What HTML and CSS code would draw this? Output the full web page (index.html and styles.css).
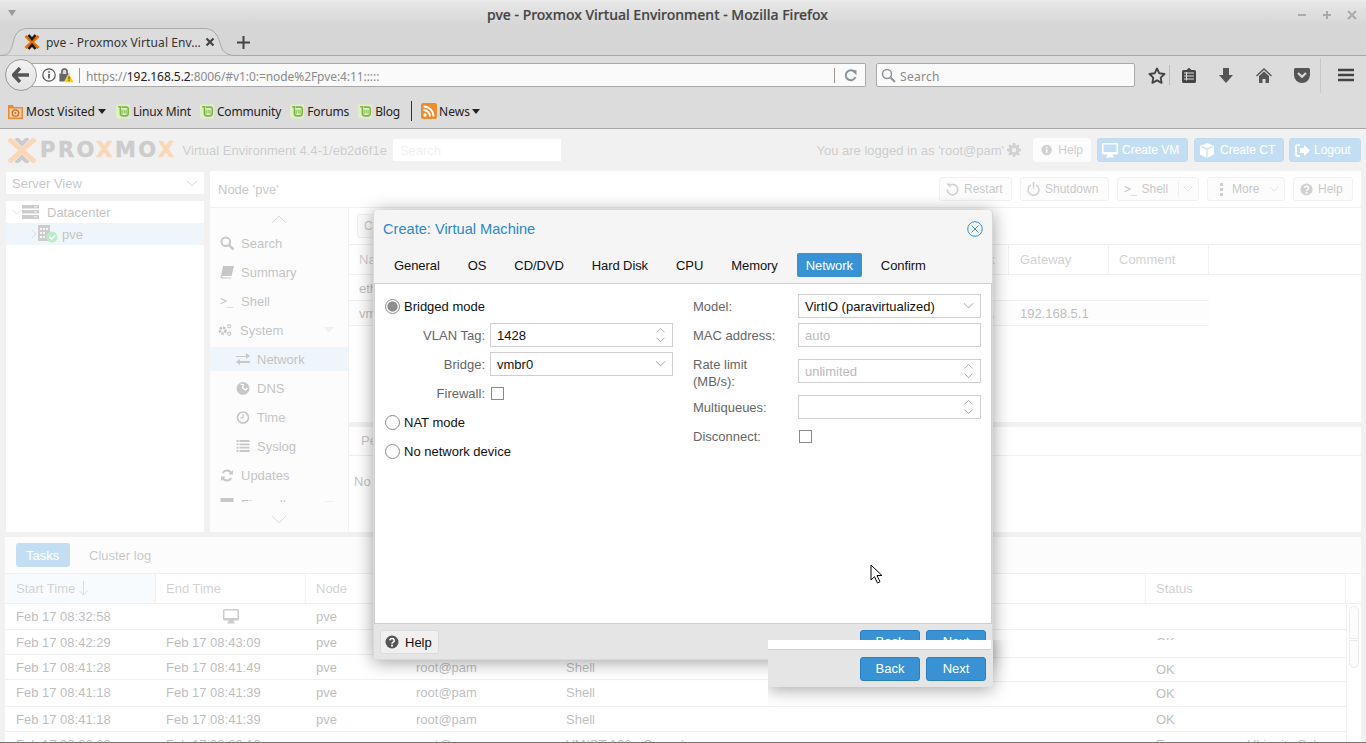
FILE: index.html
```html
<!DOCTYPE html>
<html lang="en">
<head>
<meta charset="utf-8">
<title>pve - Proxmox Virtual Environment</title>
<link rel="stylesheet" href="styles.css">
</head>
<body>
<svg class="defs" width="0" height="0">
  <symbol id="mint" viewBox="0 0 16 16"><rect width="16" height="16" fill="#dfeecb"/><path d="M2.500 2.500h2.500v7.500a3 3 0 0 0 3 3h3a3 3 0 0 0 3-3V5a2 2 0 0 0-2-2H6.500" fill="none" stroke="#7cb83e" stroke-width="1.800"/><path d="M7 11V6M9.300 10V6M11.500 11V6" stroke="#7cb83e" stroke-width="1.100"/></symbol>
  <symbol id="chev" viewBox="0 0 12 8"><path d="M1 1l5 5 5-5" fill="none" stroke="currentColor" stroke-width="1"/></symbol>
  <symbol id="spin" viewBox="0 0 12 18"><path d="M1.500 6l4.500-4.500 4.500 4.500M1.500 12l4.500 4.500 4.500-4.500" fill="none" stroke="currentColor" stroke-width="1"/></symbol>
  <symbol id="help" viewBox="0 0 14 14"><circle cx="7" cy="7" r="6.500" fill="currentColor"/><path d="M4.800 5.400a2.200 2 0 1 1 3.300 1.800c-.8.5-1.100.8-1.100 1.500" fill="none" stroke="#fff" stroke-width="1.500"/><rect x="6.100" y="9.700" width="1.800" height="1.800" fill="#fff"/></symbol>
  <symbol id="mon" viewBox="0 0 16 15"><path d="M1.500 0h13A1.500 1.500 0 0 1 16 1.500V10a1.500 1.500 0 0 1-1.500 1.500H10.500l.5 2h1v1H4v-1h1l.5-2h-4A1.500 1.500 0 0 1 0 10V1.500A1.500 1.500 0 0 1 1.500 0zM1.500 1.500V9h13V1.500z" fill="currentColor"/></symbol>
</svg>

<div class="screen">
  <header class="titlebar">
    <span class="wm-menu"></span>
    <span class="wm-title">pve - Proxmox Virtual Environment - Mozilla Firefox</span>
    <span class="wm-controls">
      <svg width="10" height="10" viewBox="0 0 10 10"><path d="M1 5h8" stroke="#aaa" stroke-width="2"/></svg>
      <svg width="10" height="10" viewBox="0 0 10 10"><path d="M1 5h8M5 1v8" stroke="#aaa" stroke-width="2"/></svg>
      <svg width="10" height="10" viewBox="0 0 10 10"><path d="M1 1l8 8M9 1l-8 8" stroke="#aaa" stroke-width="2"/></svg>
    </span>
  </header>

  <div class="tabstrip">
    <div class="tab">
      <svg class="tab-shape" width="236" height="28" viewBox="0 0 236 28"><path d="M0 27.500C9 27.500 11 23 13 15 15 5 19 .5 29 .5H203C213 .5 217 5 220 15 222 23 225 27.500 236 27.500V28H0z" fill="#dcdcdc" stroke="#a9a9a9"/></svg>
      <svg class="tab-icon" width="16" height="16" viewBox="0 0 16 16"><path d="M1.500 2L8 8l-6.500 6M14.500 2L8 8l6.500 6" fill="none" stroke="#e57000" stroke-width="3"/><path d="M4.500 1L8 5l3.500-4M4.500 15L8 11l3.500 4" fill="none" stroke="#1a1a1a" stroke-width="2.600"/></svg>
      <span class="tab-text">pve - Proxmox Virtual Env…</span>
      <svg class="tab-close" width="10" height="10" viewBox="0 0 10 10"><path d="M1.500 1.500l7 7M8.500 1.500l-7 7" stroke="#444" stroke-width="2.200"/></svg>
    </div>
    <svg class="tab-new" width="13" height="13" viewBox="0 0 13 13"><path d="M6.500 0v13M0 6.500h13" stroke="#444" stroke-width="2"/></svg>
  </div>

  <nav class="toolbar">
    <button class="back"><svg width="18" height="16" viewBox="0 0 18 16"><path d="M8 1L1.500 8 8 15M2 8h15" fill="none" stroke="#555" stroke-width="3.400"/></svg></button>
    <div class="urlbar">
      <svg class="url-info" width="14" height="14" viewBox="0 0 14 14"><circle cx="7" cy="7" r="6.200" fill="none" stroke="#555" stroke-width="1.200"/><path d="M7 6v4.500M7 3.200v1.500" stroke="#555" stroke-width="1.700"/></svg>
      <svg class="url-lock" width="15" height="16" viewBox="0 0 15 16"><path d="M1 7h9v7H1zM3 7V4.500a2.500 2.500 0 0 1 5 0V7" fill="#666" stroke="#666" stroke-width="1.200"/><path d="M3 7V4.500a2.500 2.500 0 0 1 5 0V7" fill="#dcdcdc" stroke="#666" stroke-width="1.500"/><path d="M10 6.500l5 9H5z" fill="#fc0" stroke="#fff" stroke-width=".5"/><path d="M10 9.500v3M10 13.200v1" stroke="#333"/></svg>
      <span class="url-text">https://<b>192.168.5.2</b>:8006/#v1:0:=node%2Fpve:4:11:::::</span>
      <span class="url-reload"><svg width="13" height="13" viewBox="0 0 13 13"><path d="M11 3.500A5 5 0 1 0 11.500 8" fill="none" stroke="#8a949c" stroke-width="2"/><path d="M7.500 0l5.500.5V5.500z" fill="#8a949c" transform="translate(-.5 .8)"/></svg></span>
    </div>
    <div class="searchbar">
      <svg width="15" height="15" viewBox="0 0 15 15"><circle cx="6" cy="6" r="4.500" fill="none" stroke="#8a949c" stroke-width="1.500"/><path d="M9.500 9.500l4.500 4.500" stroke="#8a949c" stroke-width="2"/></svg>
      <span class="search-t">Search</span>
    </div>
    <span class="tb star"><svg width="18" height="17" viewBox="0 0 18 17"><path d="M9 1.500l2.300 4.800 5.200.7-3.800 3.600.9 5.200L9 13.300l-4.600 2.500.9-5.200L1.500 7l5.200-.7z" fill="none" stroke="#444" stroke-width="1.900" stroke-linejoin="round"/></svg></span>
    <span class="tb list"><svg width="14" height="16" viewBox="0 0 14 16"><path d="M1.500 3h3L7 .8 9.500 3h3A1.500 1.500 0 0 1 14 4.500v10a1.500 1.500 0 0 1-1.500 1.500h-11A1.500 1.500 0 0 1 0 14.500v-10A1.500 1.500 0 0 1 1.500 3z" fill="#444"/><path d="M2 6h10M2 9h10M2 12h10M4.500 5v8.500" stroke="#dcdcdc" stroke-width="1.100"/></svg></span>
    <span class="tb"><svg width="14" height="15" viewBox="0 0 14 15"><path d="M4 0h6v7h4l-7 8-7-8h4z" fill="#555"/></svg></span>
    <span class="tb"><svg width="16" height="15" viewBox="0 0 16 15"><path d="M8 0L0 7.500l1 1L8 2l7 6.500 1-1zM8 3.500L3 8v7h3.500v-4h3v4H13V8z" fill="#555"/></svg></span>
    <span class="tb"><svg width="16" height="15" viewBox="0 0 16 15"><path d="M1.500 0h13A1.500 1.500 0 0 1 16 1.500V7A8 8 0 0 1 0 7V1.500A1.500 1.500 0 0 1 1.500 0z" fill="#555"/><path d="M4 5l4 3.800L12 5" fill="none" stroke="#dcdcdc" stroke-width="2.200"/></svg></span>
    <span class="tb menu"><svg width="16" height="14" viewBox="0 0 16 14"><path d="M0 2h16M0 7h16M0 12h16" stroke="#444" stroke-width="2.400"/></svg></span>
  </nav>

  <div class="bookmarks">
    <span class="bm bm-first"><svg width="15" height="15" viewBox="0 0 15 15"><path d="M0 1h5l1 2h9v12H0z" fill="#e98a3a"/><rect x="1.500" y="4.500" width="12" height="9" fill="#f6d3ae"/><circle cx="7.500" cy="9" r="3.200" fill="none" stroke="#d2691e" stroke-width="1.300"/><circle cx="7.500" cy="9" r="1" fill="#d2691e"/></svg><span class="bm-t">Most Visited</span><i class="caret"></i></span>
    <span class="bm bm-mint"><svg width="14" height="15"><use href="#mint"/></svg><span class="bm-t">Linux Mint</span></span>
    <span class="bm bm-mint"><svg width="14" height="15"><use href="#mint"/></svg><span class="bm-t">Community</span></span>
    <span class="bm bm-mint"><svg width="14" height="15"><use href="#mint"/></svg><span class="bm-t">Forums</span></span>
    <span class="bm bm-mint"><svg width="14" height="15"><use href="#mint"/></svg><span class="bm-t">Blog</span></span>
    <span class="bm-sep"></span>
    <span class="bm bm-news"><svg width="16" height="16" viewBox="0 0 16 16"><rect width="16" height="16" rx="2" fill="#ee8b2d"/><circle cx="4" cy="12" r="1.700" fill="#fff"/><path d="M2.500 7a6.500 6.500 0 0 1 6.500 6.500M2.500 3.500a10 10 0 0 1 10 10" fill="none" stroke="#fff" stroke-width="1.900"/></svg><span class="bm-t">News</span><i class="caret"></i></span>
  </div>

  <div class="pve">
    <div class="pve-head">
      <svg class="logo-x" width="30" height="25" viewBox="0 0 30 25"><path d="M2 1l13 11.500L2 24M28 1L15 12.500 28 24" fill="none" stroke="#e97a10" stroke-width="5"/><path d="M9 0l6 6 6-6M9 25l6-6 6 6" fill="none" stroke="#555" stroke-width="4"/></svg>
      <span class="logo-text">PRO<em>X</em>MO<em>X</em></span>
      <span class="version">Virtual Environment 4.4-1/eb2d6f1e</span>
      <span class="head-search">Search</span>
      <span class="logged">You are logged in as 'root@pam'</span>
      <svg class="gear" width="14" height="14" viewBox="0 0 14 14"><path d="M5.800 0h2.400l.3 1.900 1.200.5L11.300 1.300 12.700 2.700 11.600 4.300l.5 1.200 1.900.3v2.400l-1.900.3-.5 1.200 1.100 1.600-1.400 1.400-1.600-1.100-1.200.5L8.200 14H5.800l-.3-1.900-1.200-.5-1.600 1.100L1.300 11.300 2.400 9.700 1.900 8.500 0 8.200V5.800l1.900-.3.500-1.200L1.300 2.700 2.700 1.300l1.600 1.100 1.200-.5z" fill="#666"/><circle cx="7" cy="7" r="2.200" fill="#d0d0d0"/></svg>
      <button class="btn btn-plain head-help"><svg width="14" height="14" viewBox="0 0 14 14"><circle cx="7" cy="7" r="6.500" fill="#666"/><path d="M7 6v4.500M7 3v1.700" stroke="#fff" stroke-width="2"/></svg>Help</button>
      <button class="btn btn-blue head-vm"><svg width="16" height="15" class="ic-white"><use href="#mon"/></svg>Create VM</button>
      <button class="btn btn-blue head-ct"><svg width="14" height="15" viewBox="0 0 14 15"><path d="M7 0l7 3v8.500L7 15l-7-3.500V3z" fill="#fff"/><path d="M1 3.500L7 6l6-2.500M7 6v8.500" fill="none" stroke="#3892d4" stroke-width="1.200"/></svg>Create CT</button>
      <button class="btn btn-blue head-out"><svg width="15" height="13" viewBox="0 0 15 13"><path d="M5 1H2.500A1.500 1.500 0 0 0 1 2.500v8A1.500 1.500 0 0 0 2.500 12H5" fill="none" stroke="#fff" stroke-width="1.800"/><path d="M5 4h4V1l6 5.500L9 12V9H5z" fill="#fff"/></svg>Logout</button>
    </div>

    <div class="pve-main">
      <aside class="left">
        <div class="view-select">Server View<svg class="sel-chev" width="12" height="8"><use href="#chev"/></svg></div>
        <div class="tree">
          <div class="tree-row">
            <svg class="tw" width="10" height="7"><use href="#chev"/></svg>
            <svg width="17" height="14" viewBox="0 0 17 14"><path d="M0 0h17v3.500H0zM0 5h17v3.500H0zM0 10h17v4H0z" fill="#555"/><path d="M12 1.800h3M12 6.800h3M12 12h3" stroke="#ddd"/></svg>
            <span class="tree-dc">Datacenter</span>
          </div>
          <div class="tree-row tree-sel">
            <svg class="tw tw-r" width="7" height="10" viewBox="0 0 7 10"><path d="M1 1l4 4-4 4" fill="none" stroke="currentColor"/></svg>
            <span class="node-ic"><svg width="20" height="18" viewBox="0 0 20 18"><path d="M0 0h12v16H0z" fill="#555"/><path d="M2 3h2v2H2zM5 3h2v2H5zM8 3h2v2H8zM2 7h2v2H2zM5 7h2v2H5zM2 11h2v2H2zM5 11h2v2H5z" fill="#ddd"/><circle cx="14" cy="12" r="5.500" fill="#21bf4b"/><path d="M11.500 12l2 2 3.500-3.500" fill="none" stroke="#fff" stroke-width="1.500"/></svg></span>
            <span class="tree-pve">pve</span>
          </div>
        </div>
      </aside>

      <section class="node">
        <div class="node-head">
          <span class="node-title">Node 'pve'</span>
          <button class="btn btn-light b-restart"><svg width="13" height="13" viewBox="0 0 13 13"><path d="M3 2.800A5.200 5.200 0 1 1 1.300 6.500" fill="none" stroke="#666" stroke-width="1.600"/><path d="M0 .5h4.500V5z" fill="#666"/></svg>Restart</button>
          <button class="btn btn-light b-shut"><svg width="13" height="14" viewBox="0 0 13 14"><path d="M3.800 3a5.500 5.500 0 1 0 5.400 0" fill="none" stroke="#666" stroke-width="1.500"/><path d="M6.500 0v6.500" stroke="#666" stroke-width="1.600"/></svg>Shutdown</button>
          <button class="btn btn-light b-shell"><span class="prompt">&gt;_</span>Shell<span class="split"><svg width="10" height="7"><use href="#chev"/></svg></span></button>
          <button class="btn btn-light b-more"><svg width="3" height="13" viewBox="0 0 3 13"><path d="M0 0h3v3H0zM0 5h3v3H0zM0 10h3v3H0z" fill="#666"/></svg>More<svg class="more-chev" width="10" height="7"><use href="#chev"/></svg></button>
          <button class="btn btn-light b-help"><svg width="13" height="13" class="ic-g"><use href="#help"/></svg>Help</button>
        </div>
        <div class="node-body">
          <div class="side">
            <div class="side-arrow"><svg width="16" height="9" viewBox="0 0 16 9"><path d="M1 8l7-7 7 7" fill="none" stroke="#888"/></svg></div>
            <ul class="side-list">
              <li><svg width="14" height="14" viewBox="0 0 14 14"><circle cx="5.800" cy="5.800" r="4.300" fill="none" stroke="#444" stroke-width="2"/><path d="M9 9l4.500 4.500" stroke="#444" stroke-width="2.400"/></svg>Search</li>
              <li><svg width="14" height="14" viewBox="0 0 14 14"><path d="M3 1h11l-2.500 10H1z" fill="#444"/><path d="M1 11c0 1.500 1 2 2 2h8" fill="none" stroke="#444" stroke-width="1.200"/></svg>Summary</li>
              <li><span class="prompt">&gt;_</span>Shell</li>
              <li><svg class="wide" width="15" height="14" viewBox="0 0 15 14"><circle cx="5" cy="7.500" r="3" fill="none" stroke="#444" stroke-width="3" stroke-dasharray="2.500 1"/><circle cx="12" cy="3" r="1.700" fill="none" stroke="#444" stroke-width="1.200"/><circle cx="12" cy="11" r="1.700" fill="none" stroke="#444" stroke-width="1.200"/></svg>System<svg class="expand" width="10" height="6" viewBox="0 0 10 6"><path d="M0 0h10L5 6z" fill="#ccc"/></svg></li>
              <li class="sub sel"><svg width="14" height="12" viewBox="0 0 14 12"><path d="M0 3h10V0l4 3-4 3V4H0zM14 8H4V6L0 9l4 3v-2h10z" fill="#444"/></svg>Network</li>
              <li class="sub"><svg width="13" height="13" viewBox="0 0 13 13"><circle cx="6.500" cy="6.500" r="6.500" fill="#444"/><path d="M4 2l3 1-1 3 3 2 2-2" fill="none" stroke="#fff" stroke-width="1.200"/></svg>DNS</li>
              <li class="sub"><svg width="13" height="13" viewBox="0 0 13 13"><circle cx="6.500" cy="6.500" r="5.500" fill="none" stroke="#444" stroke-width="1.700"/><path d="M6.500 3v3.800H4" fill="none" stroke="#444" stroke-width="1.200"/></svg>Time</li>
              <li class="sub"><svg width="13" height="12" viewBox="0 0 13 12"><path d="M0 1h2M3 1h10M0 4.300h2M3 4.300h10M0 7.600h2M3 7.600h10M0 11h2M3 11h10" stroke="#444" stroke-width="1.800"/></svg>Syslog</li>
              <li><svg width="13" height="13" viewBox="0 0 13 13"><path d="M11 4.500A5 5 0 0 0 2.200 4M2 8.500A5 5 0 0 0 10.800 9" fill="none" stroke="#444" stroke-width="2"/><path d="M12.500 1v4.500H8zM.5 12V7.500H5z" fill="#444"/></svg>Updates</li>
              <li><svg width="13" height="13" viewBox="0 0 13 13"><path d="M0 0h13v13H0z" fill="#444"/></svg>Firewall<svg class="expand" width="10" height="6" viewBox="0 0 10 6"><path d="M0 0h10L5 6z" fill="#ccc"/></svg></li>
            </ul>
            <div class="side-arrow side-arrow-b"><svg width="16" height="9" viewBox="0 0 16 9"><path d="M1 1l7 7 7-7" fill="none" stroke="#888"/></svg></div>
          </div>
          <div class="content">
            <div class="net">
              <div class="net-tools"><button class="btn btn-light">Create</button></div>
              <div class="net-row net-header"><span>Name</span><span></span><span></span><span></span><span></span><span></span><span>Subnet mask</span><span>Gateway</span><span>Comment</span></div>
              <div class="net-row"><span>eth0</span><span></span><span></span><span></span><span></span><span></span><span></span><span></span><span></span></div>
              <div class="net-row net-alt"><span>vmbr0</span><span></span><span></span><span></span><span></span><span></span><span class="net-mask">255.255.255.0</span><span>192.168.5.1</span><span></span></div>
            </div>
            <div class="pending">
              <div class="pending-title">Pending changes</div>
              <div class="pending-body">No changes</div>
            </div>
          </div>
        </div>
      </section>
    </div>

    <section class="tasks">
      <div class="tasks-tabs"><span class="ttab on">Tasks</span><span class="ttab">Cluster log</span></div>
      <div class="t-row t-head">
        <span class="sorted">Start Time<svg width="11" height="15" viewBox="0 0 11 15"><path d="M5.500 0v14M1 9.500L5.500 14 10 9.500" fill="none" stroke="#888"/></svg></span><span>End Time</span><span>Node</span><span></span><span></span><span>Status</span><span class="t-fill"></span>
      </div>
      <div class="t-wrap">
        <div class="t-rows">
          <div class="t-row t-first"><span>Feb 17 08:32:58</span><span class="t-center"><svg width="16" height="15" class="ic-d"><use href="#mon"/></svg></span><span>pve</span><span></span><span></span><span></span></div>
          <div class="t-row"><span>Feb 17 08:42:29</span><span>Feb 17 08:43:09</span><span>pve</span><span></span><span></span><span>OK</span></div>
          <div class="t-row"><span>Feb 17 08:41:28</span><span>Feb 17 08:41:49</span><span>pve</span><span>root@pam</span><span>Shell</span><span></span></div>
          <div class="t-row t-tall"><span>Feb 17 08:41:18</span><span>Feb 17 08:41:39</span><span>pve</span><span>root@pam</span><span>Shell</span><span></span></div>
          <div class="t-row"><span>Feb 17 08:41:18</span><span>Feb 17 08:41:39</span><span>pve</span><span>root@pam</span><span>Shell</span><span>OK</span></div>
          <div class="t-row"><span>Feb 17 08:30:09</span><span>Feb 17 08:30:12</span><span>pve</span><span>root@pam</span><span>VM/CT 100 - Console</span><span>Error<span class="err-more">Ubiquity Sol</span></span></div>
          <div class="t-shift">
            <div class="ts-a"></div>
            <div class="ts-b"><span>OK</span></div>
            <div class="ts-c"><span>OK</span></div>
          </div>
        </div>
        <div class="t-scroll"><i class="thumb th1"></i><i class="thumb th2"></i></div>
      </div>
    </section>

    <div class="mask"></div>
  </div>
  <div class="screen-end"></div>

  <div class="dialog">
    <div class="d-title"><span>Create: Virtual Machine</span><svg width="16" height="16" viewBox="0 0 16 16"><circle cx="8" cy="8" r="7.300" fill="none" stroke="#3892d4" stroke-width="1"/><path d="M4.500 4.500l7 7M11.500 4.500l-7 7" stroke="#3892d4"/></svg></div>
    <div class="d-tabs"><span>General</span><span>OS</span><span>CD/DVD</span><span>Hard Disk</span><span>CPU</span><span>Memory</span><span class="on">Network</span><span>Confirm</span></div>
    <div class="d-body">
      <div class="d-col">
        <div class="f-row"><i class="radio on"></i><span class="r-label">Bridged mode</span></div>
        <div class="f-row"><label class="f-lab f-right">VLAN Tag:</label><div class="field"><span>1428</span><svg width="11" height="16"><use href="#spin"/></svg></div></div>
        <div class="f-row"><label class="f-lab f-right">Bridge:</label><div class="field"><span>vmbr0</span><svg width="11" height="8"><use href="#chev"/></svg></div></div>
        <div class="f-row"><label class="f-lab f-right">Firewall:</label><i class="check"></i></div>
        <div class="f-row"><i class="radio"></i><span class="r-label">NAT mode</span></div>
        <div class="f-row"><i class="radio"></i><span class="r-label">No network device</span></div>
      </div>
      <div class="d-col">
        <div class="f-row"><label class="f-lab">Model:</label><div class="field"><span>VirtIO (paravirtualized)</span><svg width="11" height="8"><use href="#chev"/></svg></div></div>
        <div class="f-row"><label class="f-lab">MAC address:</label><div class="field ph"><span>auto</span></div></div>
        <div class="f-row f-two"><label class="f-lab f-lab2">Rate limit<br>(MB/s):</label><div class="field ph"><span>unlimited</span><svg width="11" height="16"><use href="#spin"/></svg></div></div>
        <div class="f-row"><label class="f-lab">Multiqueues:</label><div class="field"><span></span><svg width="11" height="16"><use href="#spin"/></svg></div></div>
        <div class="f-row"><label class="f-lab">Disconnect:</label><i class="check"></i></div>
      </div>
    </div>
    <div class="d-foot">
      <button class="d-help"><svg width="14" height="14" class="ic-h"><use href="#help"/></svg>Help</button>
      <span class="d-grow"></span>
      <button class="d-blue">Back</button>
      <button class="d-blue">Next</button>
    </div>
  </div>

  <div class="glitch">
    <div class="g-white"></div>
    <div class="g-foot">
      <button class="d-blue">Back</button>
      <button class="d-blue">Next</button>
    </div>
  </div>

  <svg class="cursor" width="13" height="20" viewBox="0 0 13 20"><path d="M1 1v15l3.500-3.300L7.500 19l2.500-1.200-3-6.300H12z" fill="#fff" stroke="#000" stroke-width="1"/></svg>
</div>
</body>
</html>
```
FILE: styles.css
```css
* { box-sizing: border-box; }
html, body { margin: 0; padding: 0; height: 743px; overflow: hidden; }
body { font-family: "Liberation Sans", Arial, sans-serif; font-size: 13px; color: #222; background: #d0d0d0; }
.defs { position: absolute; }
button { font: inherit; }
i, em { font-style: normal; }

.screen { position: relative; width: 1366px; height: 743px; display: flex; flex-direction: column; overflow: hidden; }

/* window title */
.titlebar { height: 28px; display: flex; align-items: center; background: linear-gradient(#ededed 0, #e6e6e6 3px, #d6d6d6 25px); font-family: "Noto Sans", sans-serif; }
.wm-menu { width: 0; height: 0; margin-left: 8px; margin-top: -3px; border: 4.500px solid transparent; border-top: 6px solid #999; border-bottom: 0; }
.wm-title { flex: 1; text-align: center; font-size: 14px; font-weight: 500; color: #444; padding-left: 2px; -webkit-text-stroke: .2px #444; }
.wm-controls { display: flex; gap: 15px; margin-right: 9px; margin-top: 1px; }

/* tabs */
.tabstrip { height: 28px; background: #d6d6d6; border-bottom: 1px solid #a9a9a9; display: flex; align-items: flex-start; font-family: "Noto Sans", sans-serif; }
.tab { position: relative; width: 236px; height: 28px; display: flex; align-items: center; }
.tab-shape { position: absolute; left: 0; top: 0; }
.tab-icon { position: relative; margin-left: 24px; }
.tab-text { position: relative; margin-left: 6px; width: 155px; white-space: nowrap; font-size: 12px; letter-spacing: .1px; color: #333; }
.tab-close { position: relative; margin-left: 4px; }
.tab-new { margin: 8px 0 0 0.500px; }

/* toolbar */
.toolbar { height: 38px; background: #dcdcdc; display: flex; align-items: center; padding-left: 5px; font-family: "Noto Sans", sans-serif; }
.back { position: relative; z-index: 1; width: 32px; height: 32px; padding: 0; border-radius: 50%; border: 1px solid #9a9a9a; background: linear-gradient(#f2f2f2, #e2e2e2); display: flex; align-items: center; justify-content: center; }
.urlbar { width: 836px; height: 24px; margin-left: -7px; background: #fafafa; border: 1px solid #a9a9a9; border-left: 0; border-radius: 0 2px 2px 0; display: flex; align-items: center; padding-left: 12px; }
.url-info { flex: none; }
.url-lock { flex: none; margin-left: 3px; }
.url-text { flex: 1; margin-left: 5px; padding-left: 6px; height: 15px; line-height: 17px; border-left: 1px solid #999; color: #8c8c8c; font-size: 12px; letter-spacing: -.07px; white-space: nowrap; }
.url-text b { font-weight: 400; color: #222; }
.url-reload { width: 31px; height: 15px; border-left: 1px solid #999; display: flex; align-items: center; justify-content: center; }
.searchbar { width: 259px; height: 24px; margin-left: 10px; background: #fafafa; border: 1px solid #a9a9a9; border-radius: 2px; display: flex; align-items: center; gap: 4px; padding-left: 4px; color: #8c8c8c; font-size: 12px; letter-spacing: .3px; }
.search-t { padding-top: 2px; }
.tb { width: 38px; height: 20px; display: flex; align-items: center; justify-content: center; }
.star { width: 25px; margin-left: 9px; }
.list { border-left: 1px solid #bbb; }
.menu { height: 35px; border-left: 1px solid #c8c8c8; margin-left: -1px; width: 46px; padding-left: 4px; }

/* bookmarks */
.bookmarks { height: 35px; background: #dcdcdc; border-bottom: 1px solid #a9a9a9; display: flex; align-items: center; padding-left: 8px; font-family: "Noto Sans", sans-serif; font-size: 12px; color: #222; }
.bm { display: flex; align-items: center; gap: 3px; white-space: nowrap; }
.bm-t { padding-top: 1px; }
.bm-first { margin-right: 10px; }
.bm-mint { margin-right: 9px; gap: 3px; letter-spacing: -.15px; }
.bm-sep { width: 1px; height: 20px; background: #333; margin: 0 9px 0 2px; }
.bm-news { gap: 2px; }
.caret { width: 0; height: 0; border: 4.500px solid transparent; border-top: 5px solid #222; border-bottom: 0; }

/* proxmox page */
.pve { position: relative; flex: 1; min-height: 0; background: #d0d0d0; display: flex; flex-direction: column; overflow: hidden; }
.mask { position: absolute; inset: 0; background: rgba(255, 255, 255, .7); }
.screen-end { height: 1px; background: #777; }

.pve-head { height: 42px; flex: none; display: flex; align-items: center; padding: 0 5px 0 7px; }
.logo-text { margin-left: 3px; font-family: "DejaVu Sans", sans-serif; font-weight: 700; font-size: 21px; letter-spacing: 2.500px; color: #555; line-height: 1; -webkit-text-stroke: .5px #555; }
.logo-text em { color: #e97a10; -webkit-text-stroke: .5px #e97a10; }
.version { margin-left: 6px; font-size: 13px; color: #555; white-space: nowrap; }
.head-search { width: 168px; height: 22px; margin-left: 6px; background: #fff; color: #ccc; padding: 4px 7px; font-size: 13px; }
.logged { margin-left: auto; color: #555; white-space: nowrap; }
.gear { margin-left: 3px; margin-right: 12px; }

.btn { height: 24px; border-radius: 3px; border: 1px solid #ccc; display: inline-flex; align-items: center; gap: 6px; padding: 0 7px; white-space: nowrap; font-size: 12px; color: #555; }
.btn-plain { background: #f5f5f5; border-color: #f5f5f5; width: 58px; margin-right: 6px; }
.btn-blue { background: #3892d4; border-color: #2f86c7; color: #fff; margin-right: 6px; }
.head-vm { width: 91px; padding: 0 4px; gap: 4px; }
.head-ct { width: 90px; padding: 0 4px 0 5px; margin-right: 5px; }
.head-out { width: 72px; margin-right: 0; padding: 0 4px 0 5px; gap: 4px; }
.ic-white { color: #fff; }

.pve-main { height: 361px; flex: none; display: flex; padding: 0 5px 0 6px; gap: 6px; }
.left { width: 198px; flex: none; display: flex; flex-direction: column; gap: 7px; padding-top: 1px; }
.view-select { height: 22px; flex: none; background: #fff; color: #444; padding: 1px 6px 0; font-size: 13px; display: flex; align-items: center; justify-content: space-between; }
.sel-chev { color: #888; }
.tree { flex: 1; background: #fff; }
.tree-row { height: 22px; display: flex; align-items: center; color: #333; }
.tw { color: #888; margin-left: 6px; flex: none; }
.tw-r { margin-left: 25px; }
.tree-dc { margin-left: 8px; }
.tree-sel { background: #c7dff3; }
.node-ic { display: flex; }
.tree-pve { margin-left: 4px; }

.node { flex: 1; display: flex; flex-direction: column; min-width: 0; background: #fff; }
.node-head { height: 37px; flex: none; display: flex; align-items: center; padding: 0 8px; border-bottom: 1px solid #ccc; gap: 8px; }
.node-title { margin-right: auto; color: #444; font-size: 13px; }
.btn-light { background: #f5f5f5; color: #444; height: 24px; font-size: 12px; padding: 0 5px 0 6px; }
.b-restart { width: 73px; gap: 5px; }
.b-shut { width: 89px; gap: 5px; }
.b-shell { width: 82px; gap: 5px; }
.b-more { width: 78px; gap: 9px; padding-left: 12px; }
.b-help { width: 60px; gap: 5px; }
.ic-g { color: #666; }
.prompt { font-family: "DejaVu Sans Mono", monospace; font-size: 12px; color: #444; letter-spacing: -1px; }
.split { border-left: 1px solid #ccc; height: 16px; margin-left: auto; padding-left: 4px; display: flex; align-items: center; color: #888; }
.more-chev { color: #888; margin-left: auto; }

.node-body { flex: 1; display: flex; min-height: 0; }
.side { width: 139px; flex: none; background: #f5f5f5; border-right: 1px solid #ccc; display: flex; flex-direction: column; }
.side-arrow { height: 23px; display: flex; align-items: center; justify-content: center; flex: none; }
.side-arrow-b { height: 30px; padding-top: 4px; }
.side-list { flex: 1; min-height: 0; overflow: hidden; list-style: none; margin: 0; padding: 0; display: flex; flex-direction: column; gap: 5px; }
.side-list li { height: 24px; flex: none; display: flex; align-items: center; padding-left: 10px; gap: 7px; color: #333; position: relative; }
.side-list li > svg:first-child, .side-list li > .prompt { width: 14px; flex: none; }
.side-list .sub { padding-left: 26px; gap: 7px; }
.side-list .sel { background: #c7dff3; }
.wide { margin-left: -2px; margin-right: 1px; }
.expand { position: absolute; right: 14px; top: 9px; }

.content { flex: 1; display: flex; flex-direction: column; min-width: 0; gap: 5px; background: #d0d0d0; }
.net { height: 214px; flex: none; background: #fff; }
.net-tools { height: 37px; border-bottom: 1px solid #ccc; display: flex; align-items: center; padding-left: 8px; }
.net-row { display: grid; grid-template-columns: 100px 80px 80px 80px 120px 100px 100px 100px 100px; width: 860px; height: 26px; align-items: center; border-bottom: 1px solid #ccc; }
.net-row span { padding-left: 10px; white-space: nowrap; overflow: hidden; height: 100%; line-height: 28px; }
.net-row span:nth-child(8) { padding-left: 11px; }
.net-header { height: 30px; width: 100%; background: #fff; color: #666; }
.net-row.net-header span { border-right: 1px solid #ccc; line-height: 29px; }
.net-alt { background: #f8f8f8; height: 25px; }
.net-row.net-alt span { line-height: 26px; }
.net-row .net-mask { width: 85px; }
.pending { flex: 1; background: #fff; }
.pending-title { height: 29px; line-height: 28px; padding-left: 12px; border-bottom: 1px solid #ccc; color: #444; }
.pending-body { padding: 18px 0 0 5px; color: #333; }

.tasks { height: 205px; flex: none; margin: 5px 5px 0 5px; background: #f5f5f5; display: flex; flex-direction: column; }
.tasks-tabs { height: 36px; flex: none; display: flex; gap: 8px; padding: 6px 0 0 11px; }
.ttab { height: 24px; padding: 0 11px; line-height: 25px; border-radius: 3px; color: #444; font-size: 13px; }
.ttab.on { background: #3892d4; color: #fff; width: 54px; padding: 0 10px; }
.t-row { display: grid; grid-template-columns: 151px 150px 100px 150px 590px 200px; height: 25px; align-items: center; border-bottom: 1px solid #ccc; background: #fff; color: #222; }
.t-row > span { padding-left: 10px; white-space: nowrap; overflow: hidden; }
.t-row > span:first-child { padding-left: 11px; }
.t-first { height: 26px; }
.t-tall { height: 27px; padding-bottom: 2px; }
.t-head { grid-template-columns: 151px 150px 100px 150px 590px 200px 15px; height: 31px; flex: none; border-top: 1px solid #ccc; color: #666; }
.t-head > span { height: 100%; line-height: 29px; border-right: 1px solid #ccc; }
.t-head .sorted { background: #e8f1fa; display: flex; align-items: center; gap: 3px; }
.t-head .t-fill { border-right: 0; padding: 0; }
.t-center { display: flex; justify-content: center; }
.t-row > .t-center { padding-left: 0; }
.ic-d { color: #555; }
.t-wrap { flex: 1; display: flex; min-height: 0; overflow: hidden; }
.t-rows { width: 1341px; flex: none; background: #fff; position: relative; overflow: hidden; }
.err-more { margin-left: 62px; }
.t-scroll { flex: 1; background: #fff; border-left: 1px solid #ccc; padding: 2px 0 0 2px; display: flex; flex-direction: column; }
.thumb { display: block; width: 10px; border: 1px solid #bbb; background: #f5f5f5; }
.th1 { height: 33px; border-radius: 5px 5px 0 0; }
.th2 { height: 28px; margin-top: 1px; border-radius: 0 0 5px 5px; }

.t-shift { position: absolute; left: 763px; top: 36px; width: 578px; height: 66px; background: #fff; display: flex; flex-direction: column; color: #222; }
.ts-a { height: 18px; border-bottom: 1px solid #ccc; }
.ts-b { height: 24px; border-bottom: 1px solid #ccc; line-height: 23px; padding-left: 388px; }
.ts-c { height: 24px; line-height: 24px; padding-left: 388px; }

/* dialog */
.dialog { position: absolute; left: 373px; top: 210px; width: 620px; height: 450px; background: #f5f5f5; border: 1px solid #d8d8d8; border-top: 0; border-radius: 4px; box-shadow: 0 2px 18px rgba(0, 0, 0, .38); display: flex; flex-direction: column; }
.d-title { height: 43px; flex: none; display: flex; align-items: center; justify-content: space-between; padding: 0 9px 6px; color: #2f87cc; font-size: 14.600px; }
.d-tabs { height: 30px; flex: none; display: flex; gap: 10px; padding-left: 11px; font-size: 13px; letter-spacing: -.08px; color: #111; align-items: flex-start; }
.d-tabs span { height: 24px; line-height: 25px; padding: 0 9px; white-space: nowrap; }
.d-tabs .on { background: #3892d4; color: #fff; border-radius: 2px; }
.d-body { height: 341px; flex: none; background: #fff; border: 1px solid #cfcfcf; padding: 10px; display: flex; gap: 20px; }
.d-col { width: 288px; display: flex; flex-direction: column; gap: 5px; }
.f-row { height: 24px; flex: none; display: flex; align-items: center; gap: 5px; color: #111; }
.f-two { height: 38px; }
.f-lab { width: 100px; flex: none; color: #666; line-height: 17px; }
.f-lab2 { padding-top: 3px; }
.f-right { text-align: right; }
.field { flex: 1; height: 24px; border: 1px solid #cfcfcf; display: flex; align-items: center; justify-content: space-between; padding: 0 6px; color: #111; }
.field svg { color: #999; }
.ph { color: #bbb; }
.radio { width: 15px; height: 15px; flex: none; border-radius: 50%; border: 1px solid #8a8a8a; background: #fff; margin-right: -1px; }
.radio.on { background: radial-gradient(circle, #8e8e8e 0 4.700px, #fff 5.500px); }
.r-label { color: #111; }
.check { width: 13px; height: 13px; flex: none; border: 1px solid #8a8a8a; background: #fff; margin-left: 1px; }
.d-foot { flex: 1; display: flex; align-items: flex-start; padding: 6px 6px 0; gap: 6px; background: #e5e5e5; border-radius: 0 0 4px 4px; }
.d-help { height: 24px; width: 59px; border: 1px solid #dcdcdc; background: #f0f0f0; border-radius: 3px; display: inline-flex; align-items: center; gap: 6px; padding: 0 4px; color: #111; font-size: 13px; }
.ic-h { color: #555; }
.d-grow { flex: 1; }
.d-blue { width: 60px; height: 24px; padding: 0 0 1px; border: 1px solid #2a7fc3; background: #3892d4; color: #fff; border-radius: 3px; font-size: 13px; }

/* repaint artefact at the dialog corner */
.glitch { position: absolute; left: 768px; top: 640px; width: 225px; height: 47px; background: #e5e5e5; border-radius: 0 0 4px 0; box-shadow: 0 2px 18px rgba(0, 0, 0, .38); clip-path: inset(0 -30px -30px 0); display: flex; flex-direction: column; }
.g-white { height: 10px; flex: none; background: #fff; border-bottom: 1px solid #cfcfcf; margin-right: 2px; }
.g-foot { flex: 1; display: flex; justify-content: flex-end; gap: 6px; padding: 7px 7px 0 0; }

.cursor { position: absolute; left: 870px; top: 564px; }
```
